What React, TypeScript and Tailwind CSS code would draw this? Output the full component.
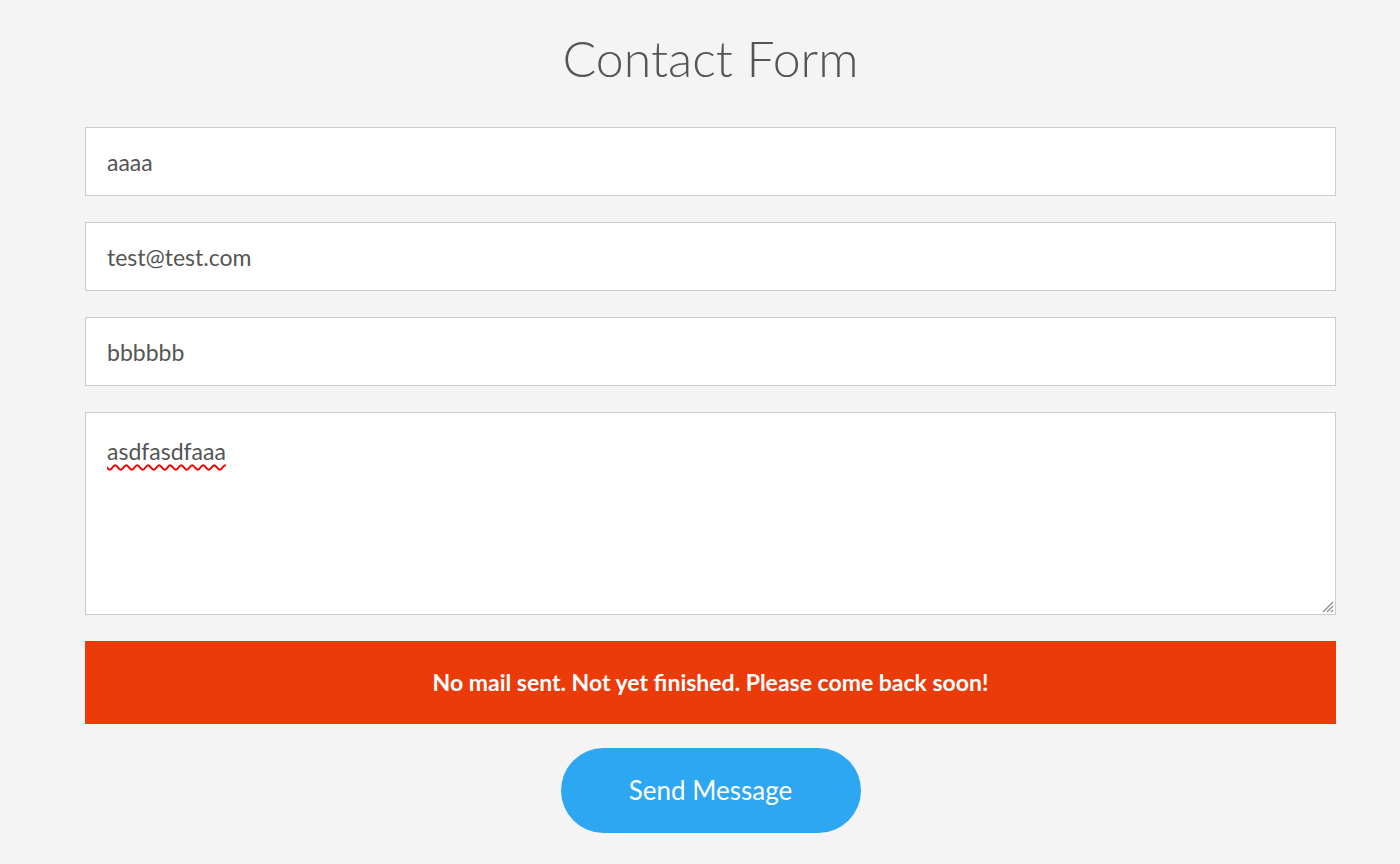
import React from 'react'

const fields = ['aaaa', 'test@test.com', 'bbbbbb']

export default function App() {
  return (
    <div className="min-h-screen bg-[#f4f4f4] pl-[85px] pt-[28px] font-['Lato','Liberation_Sans',sans-serif]">
      <div className="w-[1251px]">
        <h1 className="text-center text-[50px] font-light leading-[60px] text-[#555]">Contact Form</h1>

        <form className="mt-[39px] flex flex-col gap-[26px]" onSubmit={(e) => e.preventDefault()}>
          {fields.map((v) => (
            <input
              key={v}
              readOnly
              value={v}
              className="h-[69px] w-full border border-[#ccc] bg-white px-[21px] text-[23px] text-[#555] outline-none"
            />
          ))}

          <div className="relative h-[203px] border border-[#ccc] bg-white px-[21px] pt-[22px] text-[23px] leading-[32px] text-[#555]">
            <span className="underline decoration-[#e00] decoration-wavy decoration-[1.5px] underline-offset-[4px]">asdfasdfaaa</span>
            <svg className="absolute bottom-[1px] right-[1px]" width="14" height="14" viewBox="0 0 14 14">
              <path d="M13 3 L3 13 M13 7 L7 13 M13 11 L11 13" stroke="#888" strokeWidth="1.2" />
            </svg>
          </div>

          <div className="flex h-[83px] items-center justify-center bg-[#eb3b08] text-[23px] font-bold text-white">
            No mail sent. Not yet finished. Please come back soon!
          </div>

          <div className="-mt-[2px] flex justify-center">
            <button
              type="submit"
              className="h-[85px] w-[300px] rounded-full bg-[#2ea7f2] text-[26px] text-white"
            >
              Send Message
            </button>
          </div>
        </form>
      </div>
    </div>
  )
}
